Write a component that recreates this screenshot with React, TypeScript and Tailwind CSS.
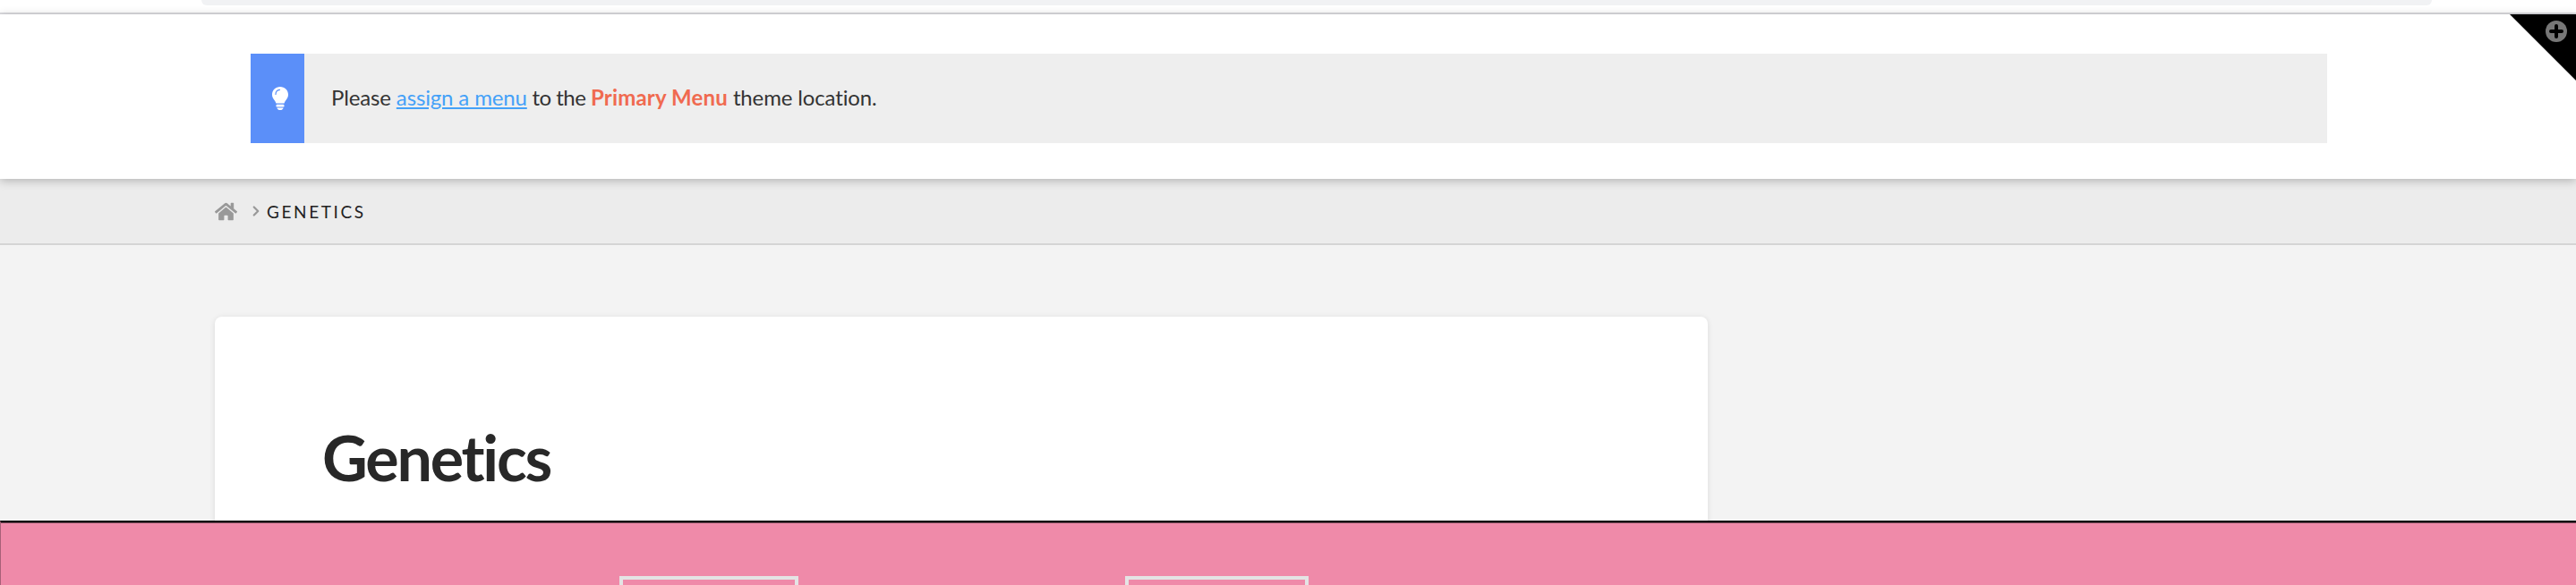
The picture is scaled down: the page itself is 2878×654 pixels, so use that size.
import React from 'react';
import { FaHome } from 'react-icons/fa';
import { ChevronRight } from 'lucide-react';

const Bulb = () => (
  <svg width="18" height="26" viewBox="0 0 18 26" className="block">
    <path
      fill="#fff"
      d="M9 0C4 0 0 3.800 0 8.800c0 2.400 1 4.200 2.200 5.800 1 1.300 1.900 2.600 2.200 4h9.200c.3-1.400 1.200-2.700 2.200-4C16.999 13 18 11.200 18 8.800 18 3.800 14 0 9 0z"
    />
    <path fill="none" stroke="#5b8ff9" strokeWidth="1.200" strokeLinecap="round" d="M4 8.500C4 5.500 6 3.500 8.500 3.300" />
    <rect x="4.500" y="19.800" width="9" height="2.800" rx="1.200" fill="#fff" />
    <path fill="#fff" d="M5.500 23.400h7c0 1.500-1.500 2.600-3.500 2.600s-3.500-1.100-3.500-2.600z" />
  </svg>
);

const PlusBadge = () => (
  <svg width="24" height="24" viewBox="0 0 24 24" className="block">
    <circle cx="12" cy="12" r="12" fill="#777" />
    <path d="M12 6v12M6 12h12" stroke="#000" strokeWidth="4" strokeLinecap="round" />
  </svg>
);

export default function App() {
  return (
    <div className="h-[654px] w-full overflow-hidden flex flex-col bg-[#f3f3f3] font-['Lato','Liberation_Sans',sans-serif]">
      {/* admin strip above the header */}
      <div className="h-[16px] shrink-0 bg-white border-b-2 border-[#dcdce0] pl-[225px]">
        <div className="h-[6px] w-[2492px] bg-[#f1f2f4] rounded-b-[14px]"></div>
      </div>

      <header className="relative z-10 h-[184px] shrink-0 bg-white shadow-[0_2px_10px_rgba(0,0,0,0.25)] pt-[44px] pl-[280px] pr-[278px]">
        <div className="flex h-[100px] bg-[#eeeeee]">
          <div className="w-[60px] shrink-0 flex items-center justify-center bg-[#5b8ff9] pl-[6px]">
            <Bulb />
          </div>
          <p className="flex items-center pl-[30px] pb-[3px] text-[24px] tracking-[-0.140px] text-[#333333]">
            <span className="whitespace-pre">Please </span>
            <a href="#" className="text-[#44a1f8] underline">assign a menu</a>
            <span className="whitespace-pre tracking-[-0.500px]"> to the </span>
            <strong className="font-bold tracking-[0.150px] text-[#f06a50]">Primary Menu</strong>
            <span className="whitespace-pre"> theme location.</span>
          </p>
        </div>
        <div className="absolute right-0 top-0 w-[74px] h-[74px] bg-black [clip-path:polygon(0_0,100%_0,100%_100%)]">
          <div className="absolute left-[40px] top-[7px]">
            <PlusBadge />
          </div>
        </div>
      </header>

      <nav className="h-[74px] shrink-0 flex items-center pl-[240px] bg-[#ececec] border-b-2 border-[#d4d4d4] text-[#222222]">
        <FaHome className="text-[#999999] text-[25px]" />
        <ChevronRight className="ml-[12px] text-[#999999]" size={18} strokeWidth={3} />
        <span className="ml-[3px] pt-[2px] text-[19px] tracking-[2.600px] uppercase">Genetics</span>
      </nav>

      <main className="flex-1 min-h-0 pt-[80px] pl-[240px] overflow-hidden">
        <article className="w-[1668px] h-[400px] bg-white rounded-[8px] shadow-[0_1px_6px_rgba(0,0,0,0.1)] pt-[115px] pl-[120px]">
          <h1 className="text-[70px] leading-[84px] font-bold tracking-[-2.200px] text-[#282828]">Genetics</h1>
        </article>
      </main>

      <footer className="relative z-10 h-[72px] shrink-0 bg-[#ef8aa9] border-t-2 border-l border-t-black border-l-[#a86078] overflow-hidden">
        <div className="h-[1px] bg-[#7a4a5a]"></div>
        <div className="flex gap-[365px] pt-[59px] pl-[691px]">
          <div className="w-[200px] h-[60px] shrink-0 border-4 border-[#e4e4e4]"></div>
          <div className="w-[205px] h-[60px] shrink-0 border-4 border-[#e4e4e4]"></div>
        </div>
      </footer>
    </div>
  );
}
